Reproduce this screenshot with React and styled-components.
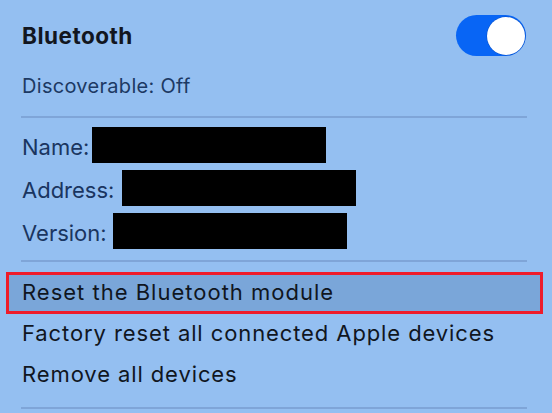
import React from 'react'
import styled, { createGlobalStyle } from 'styled-components'

const GlobalStyle = createGlobalStyle`
  html, body {
    margin: 0;
    padding: 0;
    background: #94bff1;
    font-family: Inter, "Liberation Sans", sans-serif;
  }
`

const Panel = styled.div`
  width: 552px;
  height: 413px;
  box-sizing: border-box;
  padding: 15px 25px 0 22px;
  background: #94bff1;
  overflow: hidden;
`
const Header = styled.div`
  display: flex;
  justify-content: space-between;
  align-items: center;
  height: 41px;
`
const Title = styled.h1`
  margin: 0;
  font-size: 22.5px;
  font-weight: 700;
  color: #121620;
  letter-spacing: 0.5px;
`
const Toggle = styled.div`
  width: 70px;
  height: 41px;
  box-sizing: border-box;
  padding: 1.5px;
  border-radius: 21px;
  background: ${props => props.on ? '#0865f5' : '#c9d3e0'};
  display: flex;
  justify-content: ${props => props.on ? 'flex-end' : 'flex-start'};
  margin-right: 1px;
`
const Knob = styled.div`
  width: 38px;
  height: 38px;
  border-radius: 50%;
  background: #fff;
  box-shadow: 0 0 0 0.5px rgba(0, 40, 120, 0.35);
`
const Status = styled.div`
  margin-top: 18px;
  font-size: 20px;
  line-height: 24px;
  letter-spacing: 0.3px;
  color: #1c3963;
`
const Divider = styled.hr`
  border: none;
  height: 2px;
  background: #7fa5d8;
  margin: ${props => props.space || '0'};
  margin-left: -1px;
`
const InfoList = styled.div`
  display: flex;
  flex-direction: column;
  gap: 7px;
  margin-top: 9px;
  margin-bottom: 11px;
`
const InfoRow = styled.div`
  display: flex;
  align-items: center;
  height: 36px;
  gap: ${props => props.gap || 6}px;
`
const Label = styled.span`
  font-size: 22px;
  line-height: 32px;
  padding-top: 4px;
  color: #1a3560;
`
const Redacted = styled.div`
  width: 234px;
  height: 36px;
  background: #000;
`
const Menu = styled.div`
  display: flex;
  flex-direction: column;
  margin-top: 10px;
  margin-bottom: 11px;
`
const MenuItem = styled.div`
  height: 41px;
  box-sizing: border-box;
  padding-bottom: 3px;
  font-size: 22px;
  line-height: 38px;
  letter-spacing: 0.9px;
  color: #10161f;
  white-space: nowrap;
`
const SelectedItem = styled(MenuItem)`
  height: 42px;
  margin: 0 -16px;
  padding: 0 0 2px 13px;
  line-height: 34px;
  letter-spacing: 1px;
  border: 3px solid #ee1c2b;
  background: #7aa6d9;
`

const App = () => {
  return (
    <>
      <GlobalStyle />
      <Panel>
        <Header>
          <Title>Bluetooth</Title>
          <Toggle on><Knob /></Toggle>
        </Header>
        <Status>Discoverable: Off</Status>
        <Divider space='18px 0 0' />
        <InfoList>
          <InfoRow gap={3}><Label>Name:</Label><Redacted /></InfoRow>
          <InfoRow gap={8}><Label>Address:</Label><Redacted /></InfoRow>
          <InfoRow gap={6}><Label>Version:</Label><Redacted /></InfoRow>
        </InfoList>
        <Divider />
        <Menu>
          <SelectedItem>Reset the Bluetooth module</SelectedItem>
          <MenuItem>Factory reset all connected Apple devices</MenuItem>
          <MenuItem>Remove all devices</MenuItem>
        </Menu>
        <Divider />
      </Panel>
    </>
  )
}

export default App
